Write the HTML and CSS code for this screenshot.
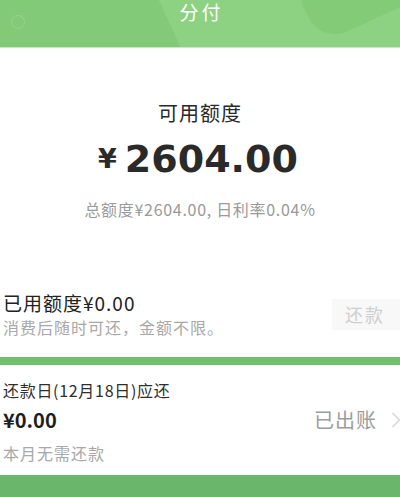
FILE: index.html
```html
<!DOCTYPE html>
<html lang="zh">
<head>
<meta charset="utf-8">
<link rel="stylesheet" href="styles.css">
</head>
<body>
<header class="topbar">
  <div class="deco-left"></div>
  <div class="deco-right"></div>
  <div class="deco-icon"></div>
  <h1 class="title">分付</h1>
</header>
<section class="quota">
  <div class="quota-label">可用额度</div>
  <div class="quota-amount"><span class="yen">¥</span>2604.00</div>
  <div class="quota-info">总额度¥2604.00, 日利率0.04%</div>
</section>
<section class="used">
  <div class="used-text">
    <div class="used-title">已用额度¥0.00</div>
    <div class="used-sub">消费后随时可还，金额不限。</div>
  </div>
  <div class="repay-btn">还款</div>
</section>
<div class="band"></div>
<section class="bill">
  <div class="bill-title">还款日(12月18日)应还</div>
  <div class="bill-row">
    <div class="bill-amount">¥0.00</div>
    <div class="bill-status">已出账<svg class="chev" width="10" height="18" viewBox="0 0 10 18"><path d="M1.5 2 L8.5 9 L1.5 16" fill="none" stroke="#d6d6d6" stroke-width="1.4"/></svg></div>
  </div>
  <div class="bill-sub">本月无需还款</div>
</section>
<div class="bottom"></div>
</body>
</html>
```
FILE: styles.css
```css
html, body {
  margin: 0;
  padding: 0;
  background: #ffffff;
  font-family: "Noto Sans CJK SC", "Noto Sans", sans-serif;
  width: 400px;
  height: 497px;
  overflow: hidden;
}
.topbar {
  position: relative;
  height: 47px;
  background: #8dd182;
  border-bottom: 1px solid #c9e9c3;
  overflow: hidden;
}
.deco-left {
  position: absolute;
  left: -40px;
  top: -60px;
  width: 222px;
  height: 110px;
  background: #82ca77;
  transform: skewX(25deg);
  transform-origin: bottom left;
}
.deco-right {
  position: absolute;
  left: 300px;
  top: -50px;
  width: 120px;
  height: 72px;
  border-radius: 30px;
  background: #84cb78;
  transform: rotate(-25deg);
}
.deco-icon {
  position: absolute;
  left: 11px;
  top: 15px;
  width: 12px;
  height: 12px;
  border: 1px solid rgba(255,255,255,0.16);
  border-radius: 50%;
}
.title {
  position: relative;
  margin: 0;
  padding-top: 2px;
  text-align: center;
  color: #ffffff;
  font-size: 19px;
  font-weight: 400;
  line-height: 20px;
  letter-spacing: 3px;
  text-indent: 3px;
}
.quota {
  display: flex;
  flex-direction: column;
  align-items: center;
  padding-top: 53px;
}
.quota-label {
  font-size: 20px;
  line-height: 24px;
  letter-spacing: 1px;
  color: #2a2a2a;
}
.quota-amount {
  margin-top: 10px;
  font-family: "DejaVu Sans", sans-serif;
  font-size: 38px;
  font-weight: 700;
  line-height: 48px;
  color: #2a2a2a;
  margin-left: -4px;
}
.quota-amount .yen {
  font-size: 27px;
  font-weight: 700;
  margin-right: 8px;
  vertical-align: 4px;
}
.quota-info {
  margin-top: 16px;
  font-size: 16px;
  line-height: 20px;
  letter-spacing: 0.7px;
  color: #9a9a9a;
}
.used {
  display: flex;
  align-items: center;
  justify-content: space-between;
  padding: 71px 0 0 3px;
}
.used-title {
  font-size: 19px;
  line-height: 26px;
  letter-spacing: 1px;
  color: #222222;
}
.used-sub {
  font-size: 16px;
  line-height: 22px;
  letter-spacing: 1px;
  color: #a8a8a8;
}
.repay-btn {
  width: 68px;
  height: 31px;
  background: #f8f8f8;
  color: #cfcfcf;
  font-size: 18px;
  line-height: 31px;
  letter-spacing: 2px;
  text-indent: 13px;
}
.band {
  margin-top: 19px;
  height: 8px;
  background: #6fc06f;
}
.bill {
  padding: 15px 0 0 3px;
  height: 110px;
  box-sizing: border-box;
}
.bill-title {
  font-size: 16px;
  line-height: 20px;
  letter-spacing: 0.7px;
  color: #2e2e2e;
}
.bill-row {
  display: flex;
  align-items: center;
  justify-content: space-between;
  margin-top: 7px;
}
.bill-amount {
  font-size: 20px;
  font-weight: 700;
  line-height: 26px;
  color: #1e1e1e;
}
.bill-status {
  display: flex;
  align-items: center;
  gap: 14px;
  font-size: 20px;
  line-height: 26px;
  letter-spacing: 1px;
  color: #9c9c9c;
  margin-right: -1px;
}
.bill-sub {
  margin-top: 10px;
  font-size: 16px;
  line-height: 20px;
  letter-spacing: 1px;
  color: #a8a8a8;
}
.bottom {
  height: 30px;
  background: #6ab66b;
}
```
